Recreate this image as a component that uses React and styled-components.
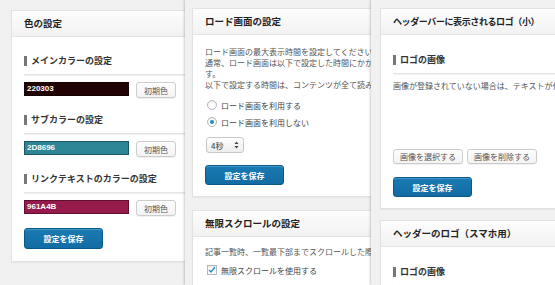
import React from "react";
import styled, { createGlobalStyle } from "styled-components";

const GlobalStyle = createGlobalStyle`
  html, body {
    margin: 0;
    padding: 0;
    background: #f1f1f1;
  }
  body {
    font-family: "Noto Sans CJK JP", "Noto Sans", sans-serif;
    color: #444;
  }
`;

const Page = styled.div`
  display: grid;
  grid-template-columns: 185px 186px 184px;
  width: 555px;
  height: 285px;
  overflow: hidden;
`;

const Column = styled.div`
  position: relative;
  min-width: 0;
  overflow: hidden;
  background: #f1f1f1;
  display: flex;
  flex-direction: column;
  align-items: flex-start;
  gap: ${({ $gap }) => $gap || 0}px;
  padding: ${({ $top }) => $top}px 0 0 ${({ $left }) => $left}px;
  box-shadow: ${({ $shadow }) =>
    $shadow ? "-1px 0 2px rgba(0, 0, 0, 0.2)" : "none"};
`;

const Panel = styled.div`
  flex-shrink: 0;
  width: 340px;
  background: #fff;
  border: 1px solid #e2e2e2;
  box-shadow: 0 1px 1px rgba(0, 0, 0, 0.04);
`;

const PanelHeader = styled.div`
  height: 25px;
  line-height: 25px;
  padding: 0 12px;
  font-size: ${({ $size }) => $size || 9.5}px;
  letter-spacing: ${({ $tight }) => ($tight ? "-0.4px" : "0")};
  font-weight: 700;
  color: #222;
  background: linear-gradient(#fdfdfd, #f2f2f2);
  border-bottom: 1px solid #e4e4e4;
  white-space: nowrap;
`;

const PanelBody = styled.div`
  padding: ${({ $top }) => $top}px 0 ${({ $bottom }) => $bottom || 11}px 12px;
`;

const Section = styled.div`
  & + & {
    margin-top: 16px;
  }
`;

const SectionTitle = styled.div`
  font-size: 9px;
  font-weight: 700;
  line-height: 12px;
  color: #333;
  padding-bottom: 7px;
  border-bottom: 1px solid #e4e4e4;
  box-shadow: 0 1px 1px rgba(0, 0, 0, 0.05);
  white-space: nowrap;

  span {
    display: inline-block;
    line-height: 10px;
    border-left: 3px solid #777;
    padding-left: 4px;
  }
`;

const ColorRow = styled.div`
  margin-top: 7px;
  display: flex;
  align-items: center;
  gap: 7px;
`;

const ColorField = styled.div`
  box-sizing: border-box;
  width: 105px;
  height: 14px;
  line-height: 12px;
  padding-left: 2px;
  font-family: "Liberation Sans", Arial, sans-serif;
  font-size: 8px;
  font-weight: 700;
  color: #fff;
  background: ${({ $color }) => $color};
  border: 1px solid rgba(0, 0, 0, 0.35);
  margin-top: -2px;
`;

const Button = styled.button`
  box-sizing: border-box;
  height: ${({ $h }) => $h || 16}px;
  padding: 0 ${({ $px }) => $px || 6}px;
  font-family: inherit;
  font-size: 8px;
  color: #555;
  background: linear-gradient(#fdfdfd, #f3f3f3);
  border: 1px solid #ccc;
  border-radius: 3px;
  box-shadow: inset 0 1px 0 #fff, 0 1px 0 rgba(0, 0, 0, 0.06);
  white-space: nowrap;
`;

const PrimaryButton = styled.button`
  box-sizing: border-box;
  margin-top: ${({ $mt }) => $mt}px;
  width: 79px;
  height: ${({ $h }) => $h || 20}px;
  font-family: inherit;
  font-size: 8px;
  font-weight: 700;
  color: #fff;
  background: linear-gradient(#1b7ab3, #126ca3);
  border: 1px solid #0b5886;
  border-radius: 3px;
  box-shadow: inset 0 1px 0 rgba(120, 200, 230, 0.4);
`;

const Text = styled.p`
  margin: ${({ $mt }) => $mt || 0}px 0 0;
  font-size: 8px;
  line-height: 11px;
  color: #555;
  white-space: nowrap;
`;

const ChoiceList = styled.div`
  margin-top: 9px;
  display: flex;
  flex-direction: column;
  gap: 5px;
`;

const Choice = styled.label`
  display: flex;
  align-items: center;
  gap: 4px;
  height: 12px;
  font-size: 8px;
  color: #444;
  white-space: nowrap;
  margin-top: ${({ $mt }) => $mt || 0}px;
`;

const Radio = styled.span`
  box-sizing: border-box;
  margin-left: 2px;
  width: 10px;
  height: 10px;
  border-radius: 50%;
  border: 1px solid #b4b9be;
  background: #fff;
  box-shadow: inset 0 1px 2px rgba(0, 0, 0, 0.1);
  display: flex;
  align-items: center;
  justify-content: center;

  &::after {
    content: "";
    width: 4px;
    height: 4px;
    border-radius: 50%;
    background: ${({ $checked }) => ($checked ? "#1e8cbe" : "transparent")};
  }
`;

const CheckBox = styled.span`
  box-sizing: border-box;
  margin-left: 2px;
  width: 10px;
  height: 10px;
  border: 1px solid #b4b9be;
  background: #fff;
  box-shadow: inset 0 1px 2px rgba(0, 0, 0, 0.1);
  display: flex;
  align-items: center;
  justify-content: center;
`;

const Select = styled.div`
  box-sizing: border-box;
  margin-top: 9px;
  width: 38px;
  height: 16px;
  padding: 0 4px;
  display: flex;
  align-items: center;
  justify-content: space-between;
  font-size: 8px;
  color: #333;
  background: linear-gradient(#fff, #ededed);
  border: 1px solid #c8c8c8;
  border-radius: 3px;
  margin-left: 1px;
`;

const ButtonRow = styled.div`
  margin-top: ${({ $mt }) => $mt}px;
  display: flex;
  gap: 4px;
`;

const ImageArea = styled.div`
  height: 58px;
`;

const SelectArrows = () => (
  <svg width="5" height="8" viewBox="0 0 5 8">
    <path d="M2.5 0.5 L4.5 3 H0.5 Z" fill="#444" />
    <path d="M2.5 7.5 L4.5 5 H0.5 Z" fill="#444" />
  </svg>
);

const CheckMark = () => (
  <svg width="9" height="8" viewBox="0 0 9 8">
    <path
      d="M1.2 4 L3.4 6.2 L7.8 1"
      fill="none"
      stroke="#1e8cbe"
      strokeWidth="1.6"
    />
  </svg>
);

const colorSettings = [
  { title: "メインカラーの設定", value: "220303", color: "#220303" },
  { title: "サブカラーの設定", value: "2D8696", color: "#2d8696" },
  { title: "リンクテキストのカラーの設定", value: "961A4B", color: "#961a4b" },
];

export default function App() {
  return (
    <>
      <GlobalStyle />
      <Page>
        <Column $top={10} $left={11}>
          <Panel>
            <PanelHeader>色の設定</PanelHeader>
            <PanelBody $top={18} $bottom={12}>
              {colorSettings.map((c) => (
                <Section key={c.value}>
                  <SectionTitle>
                    <span>{c.title}</span>
                  </SectionTitle>
                  <ColorRow>
                    <ColorField $color={c.color}>{c.value}</ColorField>
                    <Button $px={7}>初期色</Button>
                  </ColorRow>
                </Section>
              ))}
              <PrimaryButton $mt={12} $h={21}>
                設定を保存
              </PrimaryButton>
            </PanelBody>
          </Panel>
        </Column>

        <Column $top={8} $left={7} $gap={13} $shadow>
          <Panel>
            <PanelHeader>ロード画面の設定</PanelHeader>
            <PanelBody $top={11} $bottom={11}>
              <Text>ロード画面の最大表示時間を設定してください。</Text>
              <Text>通常、ロード画面は以下で設定した時間にかかわらず、読み込みが完了した時点で消えま</Text>
              <Text>す。</Text>
              <Text>以下で設定する時間は、コンテンツが全て読み込まれるまでの最大時間です。</Text>
              <ChoiceList>
                <Choice>
                  <Radio />
                  ロード画面を利用する
                </Choice>
                <Choice>
                  <Radio $checked />
                  ロード画面を利用しない
                </Choice>
              </ChoiceList>
              <Select>
                <span>4秒</span>
                <SelectArrows />
              </Select>
              <PrimaryButton $mt={12}>設定を保存</PrimaryButton>
            </PanelBody>
          </Panel>
          <Panel>
            <PanelHeader>無限スクロールの設定</PanelHeader>
            <PanelBody $top={9}>
              <Text>記事一覧時、一覧最下部までスクロールした際に次のページを自動で読み込みます。</Text>
              <Choice $mt={7}>
                <CheckBox>
                  <CheckMark />
                </CheckBox>
                無限スクロールを使用する
              </Choice>
            </PanelBody>
          </Panel>
        </Column>

        <Column $top={8} $left={9} $gap={11} $shadow>
          <Panel>
            <PanelHeader $size={9} $tight>
              ヘッダーバーに表示されるロゴ（小）
            </PanelHeader>
            <PanelBody $top={19} $bottom={11}>
              <SectionTitle>
                <span>ロゴの画像</span>
              </SectionTitle>
              <Text $mt={6}>画像が登録されていない場合は、テキストが代わりに表示されます。</Text>
              <ImageArea />
              <ButtonRow $mt={0}>
                <Button $h={15}>画像を選択する</Button>
                <Button $h={15}>画像を削除する</Button>
              </ButtonRow>
              <PrimaryButton $mt={13}>設定を保存</PrimaryButton>
            </PanelBody>
          </Panel>
          <Panel>
            <PanelHeader>ヘッダーのロゴ（スマホ用）</PanelHeader>
            <PanelBody $top={19}>
              <SectionTitle>
                <span>ロゴの画像</span>
              </SectionTitle>
            </PanelBody>
          </Panel>
        </Column>
      </Page>
    </>
  );
}
